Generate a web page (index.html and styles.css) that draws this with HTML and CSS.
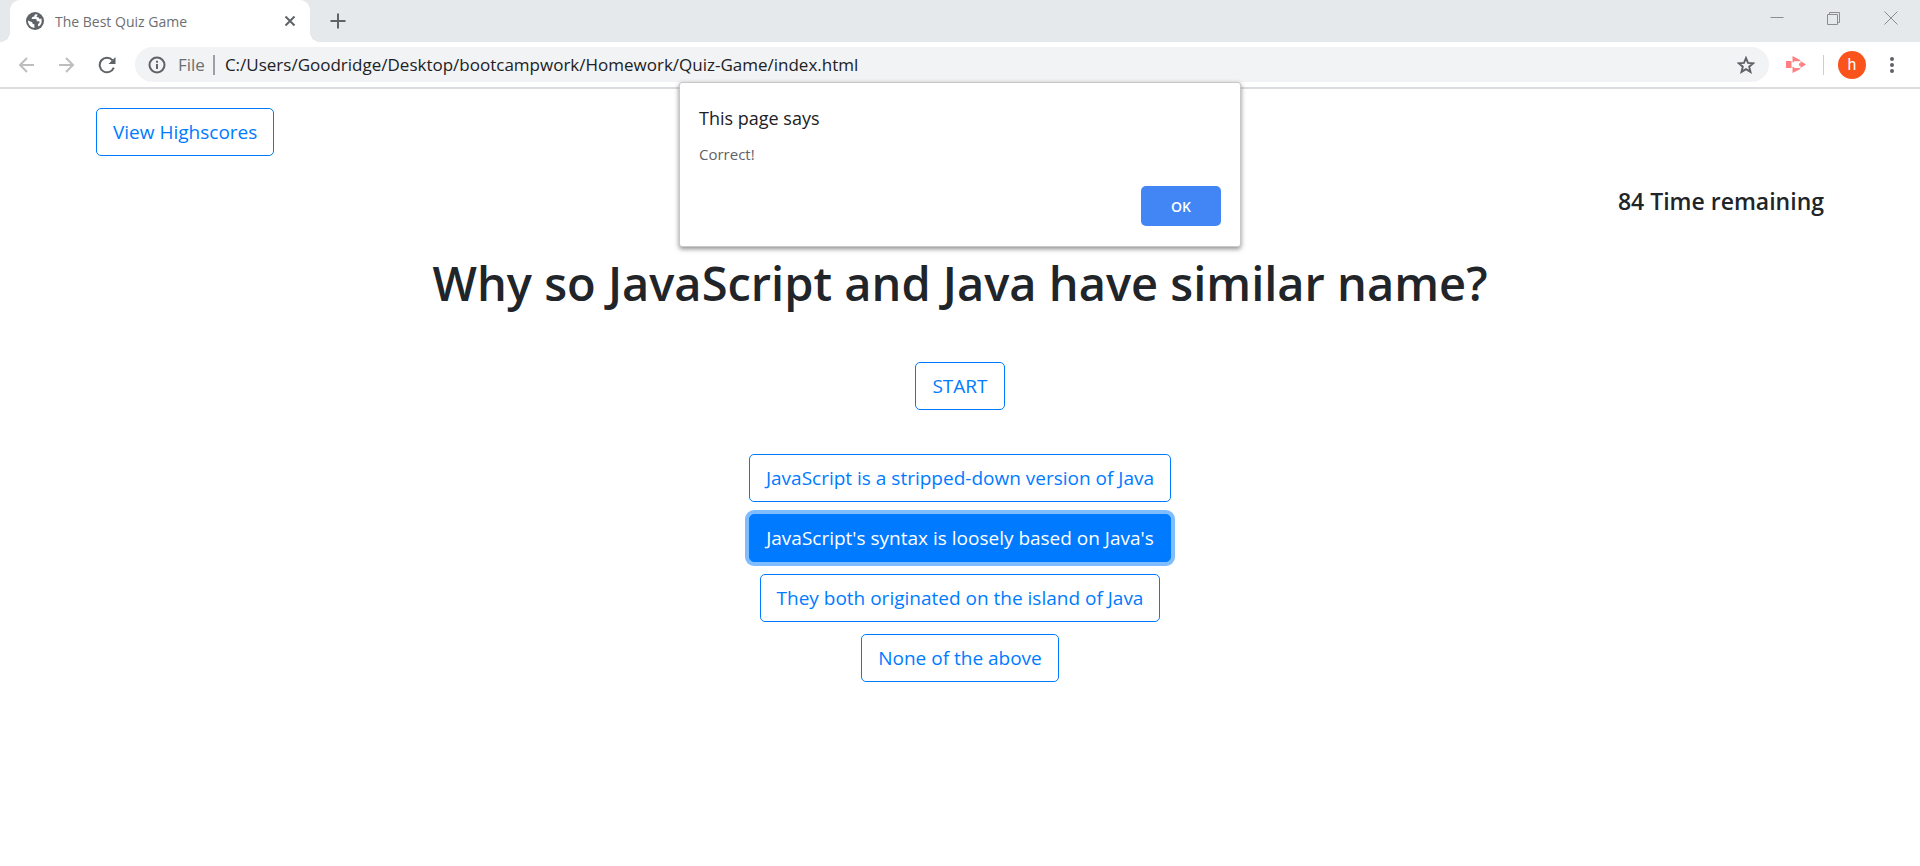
FILE: index.html
```html
<!DOCTYPE html>
<html lang="en">
<head>
<meta charset="utf-8">
<title>The Best Quiz Game</title>
<link rel="stylesheet" href="styles.css">
</head>
<body>
<header class="browser">
  <div class="tabstrip">
    <div class="tab">
      <svg class="favicon" width="18" height="18" viewBox="0 0 18 18" aria-hidden="true"><circle cx="9" cy="9" r="9" fill="#5f6368"/><path d="M10 2.200C8.500 2.500 8.200 3.600 8.400 4.600C6.500 4.500 5.600 5.600 5.700 6.900H9.500C10.800 7 11 8 10.700 9.300H13C13.800 9.400 13.800 10.700 13 11.300C11.300 12.200 12 13.700 12.600 14.600C15.500 13 16.400 9.400 15.200 6.300C14.600 7.100 13.600 7.200 13 6.500L12.700 5.300H10.900C10.200 4.500 11 3.300 12 2.700Z" fill="#fff"/><path d="M2 8.600L6.200 10.300C6.200 11.800 7.200 12.300 8.400 12.300V15.900C4.800 15.800 1.800 12.600 2 8.600Z" fill="#fff"/></svg>
      <span class="tab-title">The Best Quiz Game</span>
      <button class="icon-button" type="button" aria-label="Close tab"><svg width="12" height="12" viewBox="0 0 12 12" fill="none" stroke="#5f6368" stroke-width="2"><path d="M1.500 1.500L10.500 10.500M10.500 1.500L1.500 10.500"/></svg></button>
    </div>
    <button class="icon-button new-tab" type="button" aria-label="New tab"><svg width="16" height="16" viewBox="0 0 16 16" fill="none" stroke="#5f6368" stroke-width="2"><path d="M8 .5V15.500M.5 8H15.500"/></svg></button>
    <div class="window-controls">
      <button class="icon-button" type="button" aria-label="Minimize"><svg width="14" height="14" viewBox="0 0 14 14" stroke="#8b8d90"><path d="M.5 6.500H13.500"/></svg></button>
      <button class="icon-button" type="button" aria-label="Restore"><svg width="14" height="14" viewBox="0 0 14 14" fill="none" stroke="#8b8d90"><path d="M.5 3.500H10.500V13.500H.5ZM2.500 3.500V1.500H12.500V11.500H10.500"/></svg></button>
      <button class="icon-button" type="button" aria-label="Close window"><svg width="14" height="14" viewBox="0 0 14 14" fill="none" stroke="#8b8d90"><path d="M.5 .5L13.500 13.500M13.500 .5L.5 13.500"/></svg></button>
    </div>
  </div>
  <div class="toolbar">
    <nav class="navigation" aria-label="History">
      <button class="icon-button" type="button" aria-label="Back"><svg width="18" height="18" viewBox="0 0 18 18" fill="none" stroke="#bcbec0" stroke-width="2"><path d="M16 9H2M9 2L2 9L9 16"/></svg></button>
      <button class="icon-button" type="button" aria-label="Forward"><svg width="18" height="18" viewBox="0 0 18 18" fill="none" stroke="#bcbec0" stroke-width="2"><path d="M1 9H15M8 2L15 9L8 16"/></svg></button>
      <button class="icon-button" type="button" aria-label="Reload"><svg width="18" height="18" viewBox="0 0 18 18" fill="none" stroke="#5f6368" stroke-width="2"><path d="M15.800 11.700A7.300 7.300 0 1 1 14.600 4.300"/><path d="M17.500 1V8H10.500Z" fill="#5f6368" stroke="none"/></svg></button>
    </nav>
    <div class="omnibox">
      <svg width="18" height="18" viewBox="0 0 18 18" fill="none" stroke="#5f6368" stroke-width="2" aria-hidden="true"><circle cx="9" cy="9" r="7.500"/><path d="M9 8V13M9 4.800V6.800"/></svg>
      <label class="scheme" for="address">File</label>
      <input class="address" id="address" type="text" value="C:/Users/Goodridge/Desktop/bootcampwork/Homework/Quiz-Game/index.html">
      <button class="icon-button" type="button" aria-label="Bookmark this page"><svg width="18" height="18" viewBox="0 0 18 18" fill="none" stroke="#5f6368" stroke-width="1.900"><path d="M9 2L11 6.900L16.300 7.300L12.200 10.700L13.500 15.900L9 13.100L4.500 15.900L5.800 10.700L1.700 7.300L7 6.900Z"/></svg></button>
    </div>
    <div class="extensions">
      <button class="icon-button" type="button" aria-label="Screen recorder"><svg width="20" height="17" viewBox="0 0 20 17" fill="#ff8080"><path d="M0 5H5.500V12H0ZM6.500 0L14.500 4.300L13.500 5.200H8V6.200H6.500ZM6.500 11H8V12H13.500L14.500 12.900L6.500 17ZM14.500 5L20 8.500L14.500 12V9.800H13V7.300H14.500Z"/></svg></button>
      <button class="avatar" type="button" aria-label="Profile h">h</button>
      <button class="icon-button" type="button" aria-label="Menu"><svg width="4" height="18" viewBox="0 0 4 18" fill="#5f6368"><circle cx="2" cy="3" r="2"/><circle cx="2" cy="9" r="2"/><circle cx="2" cy="15" r="2"/></svg></button>
    </div>
  </div>
</header>
<main class="quiz">
  <button class="btn" type="button">View Highscores</button>
  <p class="timer">84 Time remaining</p>
  <section class="question">
    <h1 class="question-title">Why so JavaScript and Java have similar name?</h1>
    <button class="btn" type="button">START</button>
    <div class="answers">
      <button class="btn" type="button">JavaScript is a stripped-down version of Java</button>
      <button class="btn btn-selected" type="button">JavaScript's syntax is loosely based on Java's</button>
      <button class="btn" type="button">They both originated on the island of Java</button>
      <button class="btn" type="button">None of the above</button>
    </div>
  </section>
</main>
<div class="dialog" role="alertdialog" aria-labelledby="dialog-title" aria-describedby="dialog-text">
  <h2 class="dialog-title" id="dialog-title">This page says</h2>
  <p class="dialog-text" id="dialog-text">Correct!</p>
  <button class="dialog-ok" type="button">OK</button>
</div>
</body>
</html>
```
FILE: styles.css
```css
* { box-sizing: border-box; }

body {
  margin: 0;
  background: #fff;
  color: #212529;
  font-family: "Segoe UI", "Open Sans", "Noto Sans", sans-serif;
  font-size: 19px;
}

button, input { font: inherit; }

svg { display: block; flex: none; }

.browser { border-bottom: 2px solid #dadce0; }

.icon-button {
  display: flex;
  padding: 0;
  border: 0;
  background: none;
}

.tabstrip {
  display: flex;
  align-items: center;
  height: 42px;
  padding-left: 10px;
  background: #e6e9ec;
}

.tab {
  position: relative;
  display: flex;
  align-items: center;
  width: 300px;
  height: 42px;
  padding: 0 14px 0 16px;
  border-radius: 10px 10px 0 0;
  background: #fff;
}

.tab::before,
.tab::after {
  content: "";
  position: absolute;
  bottom: 0;
  width: 10px;
  height: 10px;
}

.tab::before {
  right: 100%;
  background: radial-gradient(circle at 0 0, transparent 10px, #fff 10px);
}

.tab::after {
  left: 100%;
  background: radial-gradient(circle at 100% 0, transparent 10px, #fff 10px);
}

.tab-title {
  flex: 1;
  padding-left: 11px;
  color: #6b6f73;
  font-size: 14px;
}

.new-tab { margin-left: 20px; }

.window-controls {
  display: flex;
  gap: 43px;
  margin-left: auto;
  padding: 0 22px 6px 0;
}

.toolbar {
  display: flex;
  align-items: center;
  height: 45px;
  padding: 0 26px 0 18px;
}

.navigation {
  display: flex;
  gap: 22px;
}

.omnibox {
  display: flex;
  flex: 1;
  align-items: center;
  height: 35px;
  margin-left: 19px;
  padding: 0 14px 0 13px;
  border-radius: 18px;
  background: #f1f3f4;
  font-size: 17px;
}

.scheme {
  margin-left: 12px;
  padding-right: 8px;
  border-right: 2px solid #9aa0a6;
  color: #6b6f73;
  line-height: 20px;
}

.address {
  flex: 1;
  min-width: 0;
  padding: 0 0 0 10px;
  border: 0;
  outline: 0;
  background: none;
  color: #202124;
}

.extensions {
  display: flex;
  align-items: center;
  padding-left: 17px;
}

.avatar {
  position: relative;
  width: 28px;
  height: 28px;
  margin: 0 24px 0 32px;
  padding: 0;
  border: 0;
  border-radius: 50%;
  background: #fa541c;
  color: #fff;
  font-family: Roboto, sans-serif;
  font-size: 16px;
  line-height: 28px;
}

.avatar::before {
  content: "";
  position: absolute;
  top: 4px;
  left: -15px;
  width: 1px;
  height: 20px;
  background: #cccfd2;
}

.quiz { padding: 19px 5% 0; }

.btn {
  padding: 8px 16px;
  border: 1px solid #007bff;
  border-radius: 5px;
  background: #fff;
  color: #007bff;
  line-height: 30px;
}

.btn-selected {
  background: #007bff;
  color: #fff;
  box-shadow: 0 0 0 4px rgba(0, 123, 255, .5);
}

.timer {
  margin: 30px 0 0;
  font-size: 23px;
  font-weight: 600;
  line-height: 30px;
  text-align: right;
}

.question {
  display: flex;
  flex-direction: column;
  align-items: center;
  padding-top: 37px;
}

.question-title {
  margin: 0 0 49px;
  font-size: 47px;
  font-weight: 600;
  line-height: 60px;
  text-align: center;
}

.answers {
  display: flex;
  flex-direction: column;
  align-items: center;
  gap: 12px;
  margin-top: 44px;
}

.dialog {
  position: absolute;
  top: 82px;
  left: 50%;
  width: 562px;
  margin-left: -281px;
  padding: 20px 19px 20px;
  border: 1px solid #c8c8c8;
  border-radius: 3px;
  background: #fff;
  box-shadow: 0 2px 5px rgba(0, 0, 0, .45);
}

.dialog-title {
  margin: 0;
  color: #202124;
  font-size: 18px;
  font-weight: 400;
  line-height: 30px;
}

.dialog-text {
  margin: 9px 0 20px;
  color: #5f6368;
  font-size: 15px;
  line-height: 24px;
}

.dialog-ok {
  display: block;
  width: 80px;
  height: 40px;
  margin-left: auto;
  border: 0;
  border-radius: 5px;
  background: #4285f4;
  color: #fff;
  font-size: 14px;
  font-weight: 600;
}
```
